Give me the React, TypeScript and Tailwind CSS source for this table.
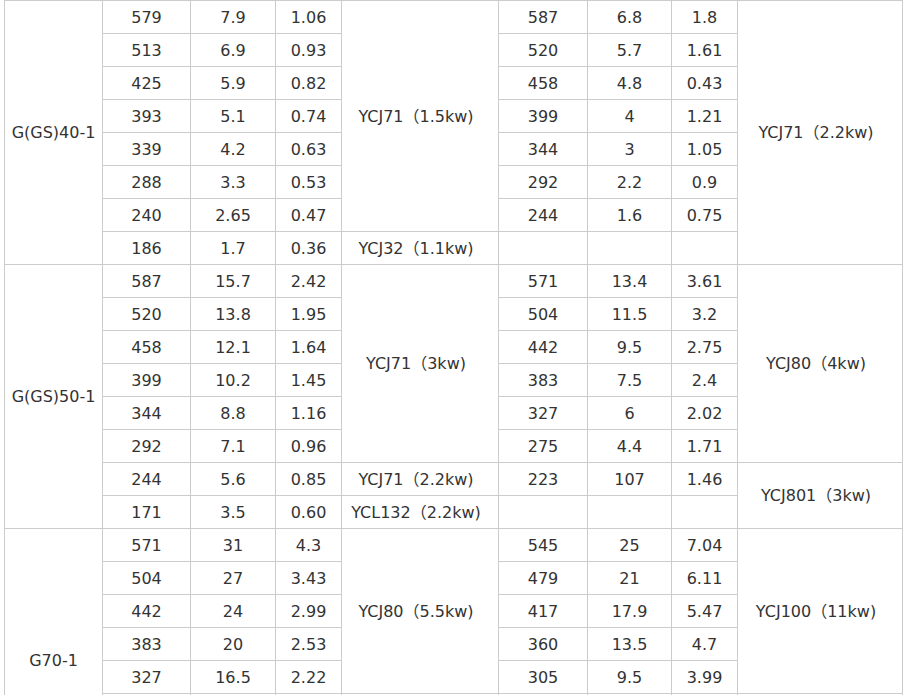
type Row = {
  a: string[]
  b: string[]
  first?: { text: string; span: number }
  motorA?: { text: string; span: number }
  motorB?: { text: string; span: number }
}

const rows: Row[] = [
  { first: { text: 'G(GS)40-1', span: 8 }, a: ['579', '7.9', '1.06'], motorA: { text: 'YCJ71（1.5kw)', span: 7 }, b: ['587', '6.8', '1.8'], motorB: { text: 'YCJ71（2.2kw)', span: 8 } },
  { a: ['513', '6.9', '0.93'], b: ['520', '5.7', '1.61'] },
  { a: ['425', '5.9', '0.82'], b: ['458', '4.8', '0.43'] },
  { a: ['393', '5.1', '0.74'], b: ['399', '4', '1.21'] },
  { a: ['339', '4.2', '0.63'], b: ['344', '3', '1.05'] },
  { a: ['288', '3.3', '0.53'], b: ['292', '2.2', '0.9'] },
  { a: ['240', '2.65', '0.47'], b: ['244', '1.6', '0.75'] },
  { a: ['186', '1.7', '0.36'], motorA: { text: 'YCJ32（1.1kw)', span: 1 }, b: ['', '', ''] },

  { first: { text: 'G(GS)50-1', span: 8 }, a: ['587', '15.7', '2.42'], motorA: { text: 'YCJ71（3kw)', span: 6 }, b: ['571', '13.4', '3.61'], motorB: { text: 'YCJ80（4kw)', span: 6 } },
  { a: ['520', '13.8', '1.95'], b: ['504', '11.5', '3.2'] },
  { a: ['458', '12.1', '1.64'], b: ['442', '9.5', '2.75'] },
  { a: ['399', '10.2', '1.45'], b: ['383', '7.5', '2.4'] },
  { a: ['344', '8.8', '1.16'], b: ['327', '6', '2.02'] },
  { a: ['292', '7.1', '0.96'], b: ['275', '4.4', '1.71'] },
  { a: ['244', '5.6', '0.85'], motorA: { text: 'YCJ71（2.2kw)', span: 1 }, b: ['223', '107', '1.46'], motorB: { text: 'YCJ801（3kw)', span: 2 } },
  { a: ['171', '3.5', '0.60'], motorA: { text: 'YCL132（2.2kw)', span: 1 }, b: ['', '', ''] },

  { first: { text: 'G70-1', span: 8 }, a: ['571', '31', '4.3'], motorA: { text: 'YCJ80（5.5kw)', span: 5 }, b: ['545', '25', '7.04'], motorB: { text: 'YCJ100（11kw)', span: 5 } },
  { a: ['504', '27', '3.43'], b: ['479', '21', '6.11'] },
  { a: ['442', '24', '2.99'], b: ['417', '17.9', '5.47'] },
  { a: ['383', '20', '2.53'], b: ['360', '13.5', '4.7'] },
  { a: ['327', '16.5', '2.22'], b: ['305', '9.5', '3.99'] },
  // rows below the fold
  { a: ['', '', ''], motorA: { text: '', span: 3 }, b: ['', '', ''], motorB: { text: '', span: 3 } },
  { a: ['', '', ''], b: ['', '', ''] },
  { a: ['', '', ''], b: ['', '', ''] },
]

const cell = 'h-[33px] border border-[#cccccc] p-0 pt-px text-center align-middle'

const App = () => {
  return (
    <div className="bg-white pl-1 font-['DejaVu_Sans','Noto_Sans_CJK_JP',sans-serif] text-[16px] text-[#333333]">
      <table className='w-[898px] table-fixed border-collapse'>
        <colgroup>
          <col className='w-[98px]' />
          <col className='w-[88px]' />
          <col className='w-[85px]' />
          <col className='w-[66px]' />
          <col className='w-[157px]' />
          <col className='w-[89px]' />
          <col className='w-[84px]' />
          <col className='w-[66px]' />
          <col className='w-[165px]' />
        </colgroup>
        <tbody>
          {rows.map((row, i) => (
            <tr key={i}>
              {row.first && (
                <td rowSpan={row.first.span} className={cell}>
                  {row.first.text}
                </td>
              )}
              {row.a.map((v, j) => (
                <td key={'a' + j} className={cell}>{v}</td>
              ))}
              {row.motorA && (
                <td rowSpan={row.motorA.span} className={`${cell} pr-2`}>
                  {row.motorA.text}
                </td>
              )}
              {row.b.map((v, j) => (
                <td key={'b' + j} className={cell}>{v}</td>
              ))}
              {row.motorB && (
                <td rowSpan={row.motorB.span} className={`${cell} pr-2`}>
                  {row.motorB.text}
                </td>
              )}
            </tr>
          ))}
        </tbody>
      </table>
    </div>
  )
}

export default App
